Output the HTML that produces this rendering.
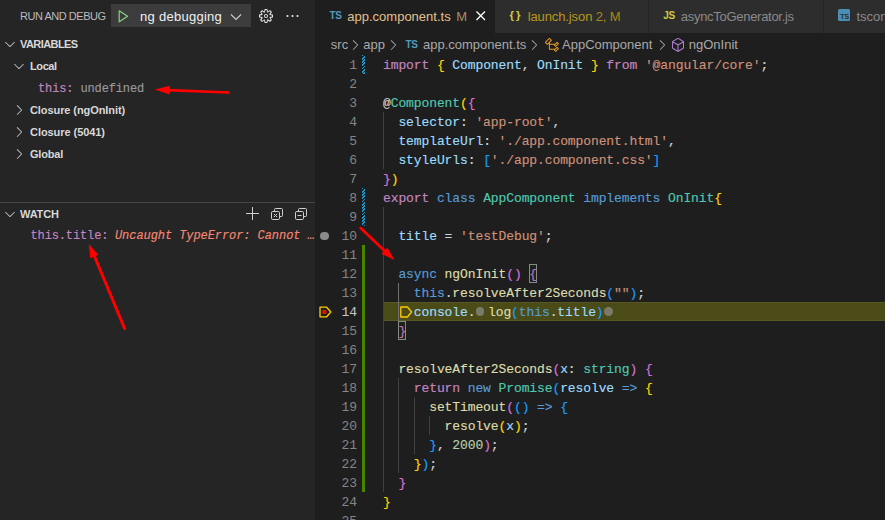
<!DOCTYPE html>
<html><head><meta charset="utf-8"><title>VS Code debug</title>
<style>
html,body{margin:0;padding:0;background:#1e1e1e;}
body{width:885px;height:520px;overflow:hidden;position:relative;font-family:"Liberation Sans",sans-serif;font-size:13px;color:#ccc;}
.abs{position:absolute;white-space:pre;}
#side{position:absolute;left:0;top:0;width:315px;height:520px;background:#252526;}
#editor{position:absolute;left:315px;top:0;width:570px;height:520px;background:#1e1e1e;overflow:hidden;}
.t11{font-size:11px;line-height:22px;height:22px;}
.b{font-weight:bold;color:#d8d8d8;}
.mono{font-family:"Liberation Mono",monospace;}
.dbg{font-family:"Liberation Mono",monospace;font-size:12px;line-height:22px;height:22px;letter-spacing:-0.13px;padding-top:1px;-webkit-text-stroke:0.15px;}
.tab{position:absolute;top:0;height:33px;background:#2d2d2d;}
.tab .lbl{position:absolute;top:0;line-height:33px;height:33px;white-space:pre;font-size:13px;}
.code{position:absolute;left:0;top:0;}
.ln{position:absolute;margin-top:1px;left:0;width:42px;text-align:right;height:19px;line-height:19px;color:#858585;font-family:"Liberation Mono",monospace;font-size:13px;letter-spacing:-0.1px;white-space:pre;}
.cl{-webkit-text-stroke:0.15px;position:absolute;margin-top:1px;left:68px;height:19px;line-height:19px;color:#d4d4d4;font-family:"Liberation Mono",monospace;font-size:13px;letter-spacing:-0.1px;white-space:pre;}
.k{color:#c586c0}.b1{color:#ffd700}.b2{color:#da70d6}.b3{color:#179fff}
.v{color:#9cdcfe}.s{color:#ce9178}.t{color:#4ec9b0}.kw{color:#569cd6}.f{color:#dcdcaa}.n{color:#b5cea8}
.g{position:absolute;width:1px;background:#404040;}
.ln.cur{color:#c6c6c6}
.hatch{background:repeating-linear-gradient(135deg,#1c9bd0 0,#1c9bd0 1.3px,#1e1e1e 1.3px,#1e1e1e 2.3px);}
.bm{border:1px solid #888888;background:rgba(0,100,0,0.1);}
.bc{position:absolute;top:34px;height:22px;line-height:22px;font-size:13px;color:#a9a9a9;white-space:pre;}
</style></head><body>
<div id="side">
  <div class="abs t11" style="left:20px;top:5px;color:#bbbbbb;letter-spacing:-0.47px;">RUN AND DEBUG</div>
  <div class="abs" style="left:111px;top:4px;width:140px;height:23px;background:#3c3c3c;"></div>
  <svg class="abs" style="left:115px;top:8px" width="16" height="16" viewBox="0 0 16 16"><path d="M4.2 2.8 L12.6 8.3 L4.2 13.8 Z" fill="none" stroke="#89d185" stroke-width="1.2" stroke-linejoin="round"/></svg>
  <div class="abs" style="left:140px;top:4.5px;line-height:23px;font-size:13px;color:#f0f0f0;letter-spacing:0.27px;">ng debugging</div>
  <svg class="abs" style="left:228px;top:9px" width="16" height="16" viewBox="0 0 16 16"><path d="M3 5.5 L8 10.5 L13 5.5" fill="none" stroke="#cccccc" stroke-width="1.1"/></svg>
  <svg class="abs" style="left:258.3px;top:8px" width="16" height="16" viewBox="0 0 16 16"><path fill="#e0e0e0" fill-rule="evenodd" d="M9.1 4.4L8.6 2H7.4l-.5 2.400-.7.300-2-1.300-.9.800 1.300 2-.2.700-2.400.500v1.200l2.400.500.3.800-1.300 2 .8.800 2-1.300.8.300.4 2.300h1.200l.5-2.400.8-.3 2 1.300.8-.8-1.300-2 .3-.8 2.300-.4V7.400l-2.400-.5-.3-.8 1.300-2-.8-.8-2 1.300-.7-.2zM9.400 1l.5 2.400L12 2.100l2 2-1.400 2.100 2.400.4v2.800l-2.400.5L14 12l-2 2-2.100-1.400-.5 2.400H6.600l-.5-2.400L4 13.900l-2-2 1.400-2.100L1 9.400V6.600l2.400-.5L2.100 4l2-2 2.100 1.400.4-2.400h2.800zm.6 7c0 1.100-.9 2-2 2s-2-.9-2-2 .9-2 2-2 2 .9 2 2zM8 9c.6 0 1-.4 1-1s-.4-1-1-1-1 .4-1 1 .4 1 1 1z"/></svg>
  <svg class="abs" style="left:284px;top:8px" width="16" height="16" viewBox="0 0 16 16"><g fill="#e4e4e4"><circle cx="3.5" cy="8" r="1.1"/><circle cx="8.5" cy="8" r="1.1"/><circle cx="13.5" cy="8" r="1.1"/></g></svg>

  <!-- VARIABLES -->
  <svg class="abs" style="left:2px;top:36px" width="16" height="16" viewBox="0 0 16 16"><path d="M7.976 10.072l4.357-4.357.62.618L8.284 11h-.618L3 6.333l.619-.618 4.357 4.357z" fill="#c5c5c5"/></svg>
  <div class="abs t11 b" style="left:20px;top:33px;letter-spacing:-0.57px;">VARIABLES</div>
  <svg class="abs" style="left:11px;top:58px" width="16" height="16" viewBox="0 0 16 16"><path d="M7.976 10.072l4.357-4.357.62.618L8.284 11h-.618L3 6.333l.619-.618 4.357 4.357z" fill="#c5c5c5"/></svg>
  <div class="abs t11 b" style="left:30px;top:55px;letter-spacing:-0.4px;">Local</div>
  <div class="abs dbg" style="left:38px;top:77px;"><span style="color:#c586c0">this:</span> <span style="color:#9a9a9a">undefined</span></div>
  <svg class="abs" style="left:10.5px;top:102px" width="16" height="16" viewBox="0 0 16 16"><path d="M10.072 8.024L5.715 3.667l.618-.62L11 7.716v.618L6.333 13l-.618-.619 4.357-4.357z" fill="#c5c5c5"/></svg>
  <div class="abs t11 b" style="left:30px;top:99px;letter-spacing:-0.08px;">Closure (ngOnInit)</div>
  <svg class="abs" style="left:10.5px;top:124px" width="16" height="16" viewBox="0 0 16 16"><path d="M10.072 8.024L5.715 3.667l.618-.62L11 7.716v.618L6.333 13l-.618-.619 4.357-4.357z" fill="#c5c5c5"/></svg>
  <div class="abs t11 b" style="left:30px;top:121px;letter-spacing:-0.06px;">Closure (5041)</div>
  <svg class="abs" style="left:10.5px;top:146px" width="16" height="16" viewBox="0 0 16 16"><path d="M10.072 8.024L5.715 3.667l.618-.62L11 7.716v.618L6.333 13l-.618-.619 4.357-4.357z" fill="#c5c5c5"/></svg>
  <div class="abs t11 b" style="left:30px;top:143px;letter-spacing:-0.2px;">Global</div>

  <!-- WATCH -->
  <div class="abs" style="left:0;top:202px;width:315px;height:1px;background:#454545;"></div>
  <svg class="abs" style="left:2px;top:206px" width="16" height="16" viewBox="0 0 16 16"><path d="M7.976 10.072l4.357-4.357.62.618L8.284 11h-.618L3 6.333l.619-.618 4.357 4.357z" fill="#c5c5c5"/></svg>
  <div class="abs t11 b" style="left:20px;top:203px;letter-spacing:-0.15px;">WATCH</div>
  <svg class="abs" style="left:244px;top:205px" width="16" height="16" viewBox="0 0 16 16"><path d="M8.5 2 V15 M2 8.5 H15" fill="none" stroke="#d0d0d0" stroke-width="1"/></svg>
  <svg class="abs" style="left:269px;top:206px" width="16" height="16" viewBox="0 0 16 16"><g fill="none" stroke="#d0d0d0" stroke-width="1"><rect x="2.5" y="5.5" width="8" height="8" rx="1.2"/><path d="M5.5 5.5 V3.5 Q5.5 2.5 6.5 2.5 H12.5 Q13.500 2.500 13.500 3.500 V9.500 Q13.500 10.500 12.500 10.500 H10.500"/><path d="M4.900 7.900 L8.100 11.100 M8.100 7.900 L4.900 11.100"/></g></svg>
  <svg class="abs" style="left:293px;top:206px" width="16" height="16" viewBox="0 0 16 16"><g fill="none" stroke="#d0d0d0" stroke-width="1"><rect x="2.5" y="5.5" width="8" height="8" rx="1.2"/><path d="M5.5 5.5 V3.5 Q5.5 2.5 6.5 2.5 H12.5 Q13.500 2.500 13.500 3.500 V9.500 Q13.500 10.500 12.500 10.500 H10.500"/><path d="M4.500 9.500 H8.500"/></g></svg>
  <div class="abs dbg" style="left:30.5px;top:224px;width:284.5px;overflow:hidden;"><span style="color:#c586c0">this.title:</span><span style="color:#f48771;font-style:italic;margin-left:6.7px;letter-spacing:-0.07px">Uncaught TypeError: Cannot …</span></div>

  <!-- red arrows -->
  <svg class="abs" style="left:0;top:0" width="315" height="520" viewBox="0 0 315 520">
    <g fill="#ff0000" stroke="none">
      <path d="M154.8 89.5 L169.8 85.8 L169.8 94.6 Z"/>
      <path d="M88.8 244 L98.4 254.8 L90.2 258.3 Z"/>
    </g>
    <g stroke="#ff0000" fill="none" stroke-linecap="round">
      <path d="M168 90.2 L228.6 92.5" stroke-width="2.7"/>
      <path d="M94 255 L124.6 328.5" stroke-width="3"/>
    </g>
  </svg>
</div>

<div id="editor">
  <!-- tabs -->
  <div class="abs" style="left:0;top:0;width:570px;height:33px;background:#252526;"></div>
  <div class="tab" style="left:0;width:180px;background:#1e1e1e;">
    <span class="lbl" style="left:14.5px;font-size:10px;font-weight:bold;color:#519aba;letter-spacing:-0.3px;top:-1px">TS</span>
    <span class="lbl" style="left:32.3px;color:#e2c08d;">app.component.ts</span>
    <span class="lbl" style="left:141.3px;color:#a48e6b;">M</span>
    <svg class="abs" style="left:160px;top:10px" width="12" height="12" viewBox="0 0 12 12"><path d="M1.5 1.5 L10 10 M10 1.5 L1.5 10" stroke="#ffffff" stroke-width="1.3" fill="none"/></svg>
  </div>
  <div class="tab" style="left:180px;width:153px;">
    <span class="lbl" style="left:14.5px;font-size:11.5px;font-weight:bold;color:#cbcb41;top:-1.5px;letter-spacing:2px">{}</span>
    <span class="lbl" style="left:32.7px;color:#b8971a;letter-spacing:-0.11px">launch.json <span style="color:#a88a18">2, M</span></span>
  </div>
  <div class="tab" style="left:334px;width:174px;">
    <span class="lbl" style="left:14.3px;font-size:10px;font-weight:bold;color:#cbcb41;letter-spacing:-0.3px;top:-1px">JS</span>
    <span class="lbl" style="left:31.8px;color:#8a8a8a;letter-spacing:-0.29px">asyncToGenerator.js</span>
  </div>
  <div class="tab" style="left:509px;width:80px;">
    <span class="abs" style="left:14px;top:8.5px;width:12.3px;height:12.7px;background:#4a8fb3;border-radius:1.5px;"></span>
    <span class="abs" style="left:16.3px;top:12.5px;font-size:7px;line-height:8px;font-weight:bold;color:#2d2d2d;">TS</span>
    <span class="lbl" style="left:32.5px;color:#8a8a8a;">tsconfig.json</span>
  </div>

  <!-- breadcrumbs -->
  <span class="bc" style="left:15.8px">src</span>
  <svg class="abs" style="left:31.5px;top:36.5px" width="16" height="16" viewBox="0 0 16 16"><path d="M10.072 8.024L5.715 3.667l.618-.62L11 7.716v.618L6.333 13l-.618-.619 4.357-4.357z" fill="#a9a9a9"/></svg>
  <span class="bc" style="left:48.3px">app</span>
  <svg class="abs" style="left:70px;top:36.5px" width="16" height="16" viewBox="0 0 16 16"><path d="M10.072 8.024L5.715 3.667l.618-.62L11 7.716v.618L6.333 13l-.618-.619 4.357-4.357z" fill="#a9a9a9"/></svg>
  <span class="bc" style="left:90.5px;font-size:10px;font-weight:bold;color:#519aba;letter-spacing:-0.3px;top:34px">TS</span>
  <span class="bc" style="left:108px">app.component.ts</span>
  <svg class="abs" style="left:211px;top:36.5px" width="16" height="16" viewBox="0 0 16 16"><path d="M10.072 8.024L5.715 3.667l.618-.62L11 7.716v.618L6.333 13l-.618-.619 4.357-4.357z" fill="#a9a9a9"/></svg>
  <svg class="abs" style="left:228.5px;top:36.5px" width="16" height="16" viewBox="0 0 16 16"><path fill="#ee9d28" d="M11.34 9.71h.71l2.67-2.67v-.71L13.38 5h-.7l-1.82 1.81h-5V5.56l1.86-1.85V3l-2-2H5L1 5v.71l2 2h.71l1.14-1.15v5.79l.5.5H10v.52l1.33 1.34h.71l2.67-2.67v-.71L13.37 10h-.7l-1.86 1.85h-5v-4H10v.48l1.34 1.38zm1.69-3.65l.63.63-2 2-.63-.63 2-2zm0 5l.63.63-2 2-.63-.63 2-2zM3.35 6.650l-1.290-1.300 3.290-3.290 1.300 1.290-3.300 3.300z"/></svg>
  <span class="bc" style="left:247px">AppComponent</span>
  <svg class="abs" style="left:339px;top:36.5px" width="16" height="16" viewBox="0 0 16 16"><path d="M10.072 8.024L5.715 3.667l.618-.62L11 7.716v.618L6.333 13l-.618-.619 4.357-4.357z" fill="#a9a9a9"/></svg>
  <svg class="abs" style="left:355px;top:36.5px" width="16" height="16" viewBox="0 0 16 16"><path fill="#b180d7" d="M13.51 4l-5-3h-1l-5 3-.49.86v6l.49.85 5 3h1l5-3 .49-.85v-6L13.510 4zm-6 9.560l-4.500-2.700V5.700l4.500 2.450v5.410zM3.270 4.700l4.740-2.840 4.740 2.840-4.740 2.590L3.270 4.700zm9.740 6.160l-4.500 2.700V8.150l4.500-2.450v5.160z"/></svg>
  <span class="bc" style="left:373.8px">ngOnInit</span>

  <div id="code" class="code">
<div class="abs" style="left:68px;top:302px;width:520px;height:19px;background:#4b4b18;box-shadow:inset 0 1px #575721, inset 0 -1px #575721;"></div>
<div class="abs hatch" style="left:47px;top:55px;width:3px;height:19px;"></div>
<div class="abs hatch" style="left:47px;top:188px;width:3px;height:38px;"></div>
<div class="abs" style="left:47px;top:245px;width:3px;height:247px;background:#488400;"></div>
<div class="g" style="left:68px;top:112px;height:57px;background:#404040"></div>
<div class="g" style="left:68px;top:207px;height:285px;background:#404040"></div>
<div class="g" style="left:83px;top:283px;height:38px;background:#707070"></div>
<div class="g" style="left:83px;top:378px;height:95px;background:#404040"></div>
<div class="g" style="left:99px;top:397px;height:57px;background:#404040"></div>
<div class="g" style="left:114px;top:416px;height:19px;background:#404040"></div>
<div class="ln" style="top:55px">1</div>
<div class="cl" style="top:55px"><span class="k">import</span> <span class="b1">{</span><span class="v"> Component</span>,<span class="v"> OnInit</span> <span class="b1">}</span><span class="k"> from</span><span class="s"> '@angular/core'</span>;</div>
<div class="ln" style="top:74px">2</div>
<div class="ln" style="top:93px">3</div>
<div class="cl" style="top:93px">@<span class="t">Component</span><span class="b1">(</span><span class="b2">{</span></div>
<div class="ln" style="top:112px">4</div>
<div class="cl" style="top:112px"><span class="v">  selector</span>:<span class="s"> 'app-root'</span>,</div>
<div class="ln" style="top:131px">5</div>
<div class="cl" style="top:131px"><span class="v">  templateUrl</span>:<span class="s"> './app.component.html'</span>,</div>
<div class="ln" style="top:150px">6</div>
<div class="cl" style="top:150px"><span class="v">  styleUrls</span>: <span class="b3">[</span><span class="s">'./app.component.css'</span><span class="b3">]</span></div>
<div class="ln" style="top:169px">7</div>
<div class="cl" style="top:169px"><span class="b2">}</span><span class="b1">)</span></div>
<div class="ln" style="top:188px">8</div>
<div class="cl" style="top:188px"><span class="k">export</span><span class="kw"> class</span><span class="t"> AppComponent</span><span class="kw"> implements</span><span class="t"> OnInit</span><span class="b1">{</span></div>
<div class="ln" style="top:207px">9</div>
<div class="ln" style="top:226px">10</div>
<div class="cl" style="top:226px"><span class="v">  title</span> = <span class="s">'testDebug'</span>;</div>
<div class="ln" style="top:245px">11</div>
<div class="ln" style="top:264px">12</div>
<div class="cl" style="top:264px"><span class="kw">  async</span><span class="f"> ngOnInit</span><span class="b2">()</span> <span class="b2">{</span></div>
<div class="ln" style="top:283px">13</div>
<div class="cl" style="top:283px"><span class="kw">    this</span>.<span class="f">resolveAfter2Seconds</span><span class="b3">(</span><span class="s">""</span><span class="b3">)</span>;</div>
<div class="ln cur" style="top:302px">14</div>
<div class="cl" style="top:302px;left:98.8px"><span class="v">console</span>.</div>
<div class="cl" style="top:302px;left:173px"><span class="f">log</span><span class="b3">(</span><span class="kw">this</span>.<span class="v">title</span><span class="b3">)</span></div>
<div class="ln" style="top:321px">15</div>
<div class="cl" style="top:321px"><span class="b2">  }</span></div>
<div class="ln" style="top:340px">16</div>
<div class="ln" style="top:359px">17</div>
<div class="cl" style="top:359px"><span class="f">  resolveAfter2Seconds</span><span class="b2">(</span><span class="v">x</span>:<span class="t"> string</span><span class="b2">)</span> <span class="b2">{</span></div>
<div class="ln" style="top:378px">18</div>
<div class="cl" style="top:378px"><span class="k">    return</span><span class="kw"> new</span><span class="t"> Promise</span><span class="b3">(</span><span class="v">resolve</span><span class="kw"> =&gt;</span> <span class="b1">{</span></div>
<div class="ln" style="top:397px">19</div>
<div class="cl" style="top:397px"><span class="f">      setTimeout</span><span class="b2">(</span><span class="b3">()</span><span class="kw"> =&gt;</span> <span class="b3">{</span></div>
<div class="ln" style="top:416px">20</div>
<div class="cl" style="top:416px"><span class="f">        resolve</span><span class="b1">(</span><span class="v">x</span><span class="b1">)</span>;</div>
<div class="ln" style="top:435px">21</div>
<div class="cl" style="top:435px"><span class="b3">      }</span>,<span class="n"> 2000</span><span class="b2">)</span>;</div>
<div class="ln" style="top:454px">22</div>
<div class="cl" style="top:454px"><span class="b1">    }</span><span class="b3">)</span>;</div>
<div class="ln" style="top:473px">23</div>
<div class="cl" style="top:473px"><span class="b2">  }</span></div>
<div class="ln" style="top:492px">24</div>
<div class="cl" style="top:492px"><span class="b1">}</span></div>
<div class="ln" style="top:511px">25</div>
<div class="abs bm" style="left:83px;top:321px;width:6px;height:17px;"></div>
<div class="abs bm" style="left:214.3px;top:264px;width:6px;height:17px;"></div>
<div class="abs" style="left:5px;top:231.5px;width:8.6px;height:8.6px;border-radius:50%;background:#8a8a8a;"></div>
<div class="abs" style="left:160.5px;top:307.2px;width:8.8px;height:8.8px;border-radius:50%;background:#7a7a6a;"></div>
<div class="abs" style="left:288.9px;top:307.2px;width:8.8px;height:8.8px;border-radius:50%;background:#7a7a6a;"></div>
<svg class="abs" style="left:3px;top:304px" width="16" height="16" viewBox="0 0 16 16"><path d="M2 3.2 H8.6 L12.8 8 L8.6 12.8 H2 Z" fill="none" stroke="#ffcc00" stroke-width="1.3" stroke-linejoin="round"/><circle cx="6.4" cy="8" r="2.2" fill="#e51400"/></svg>
<svg class="abs" style="left:83px;top:304px" width="16" height="16" viewBox="0 0 16 16"><path d="M2.8 3 H9.4 L13.6 8 L9.4 13 H2.8 Z" fill="none" stroke="#ffcc00" stroke-width="1.3" stroke-linejoin="round"/></svg>
<svg class="abs" style="left:0;top:0" width="570" height="520" viewBox="315 0 570 520"><path d="M394.5 260 L381.2 253.7 L387.5 247.8 Z" fill="#ff0000"/><path d="M360.6 228 L385 251.3" stroke="#ff0000" stroke-width="2.7" stroke-linecap="round" fill="none"/></svg>
</div>
</div>
</body></html>
